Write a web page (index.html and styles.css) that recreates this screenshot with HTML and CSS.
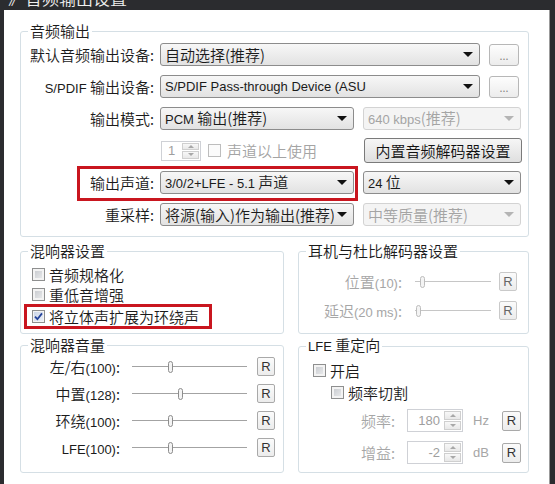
FILE: index.html
```html
<!DOCTYPE html>
<html lang="zh-CN">
<head>
    <meta charset="UTF-8">
    <title>音频输出设置</title>
    <link rel="stylesheet" href="styles.css">
</head>
<body>
    <div class="window">
        <div class="titlebar"><span>》音频输出设置</span></div>

        <div class="dialog">
            <fieldset class="group">
                <legend>音频输出</legend>
                <div class="rows">
                    <div class="row">
                        <span class="lbl">默认音频输出设备:</span>
                        <div class="combo w-wide"><span class="val">自动选择(推荐)</span><i class="arrow"></i></div>
                        <button class="more">...</button>
                    </div>
                    <div class="row">
                        <span class="lbl"><span class="en">S/PDIF</span> 输出设备:</span>
                        <div class="combo w-wide"><span class="val en">S/PDIF Pass-through Device (ASU</span><i class="arrow"></i></div>
                        <button class="more">...</button>
                    </div>
                    <div class="row">
                        <span class="lbl">输出模式:</span>
                        <div class="combo w-mid"><span class="val"><span class="en">PCM</span> 输出(推荐)</span><i class="arrow"></i></div>
                        <div class="combo w-side disabled"><span class="val"><span class="en">640 kbps</span>(推荐)</span><i class="arrow"></i></div>
                    </div>
                    <div class="row">
                        <span class="lbl"></span>
                        <div class="spin spin-sm"><span class="spin-val en">1</span><span class="spin-btns"><i class="up"></i><i class="down"></i></span></div>
                        <span class="check off"><span class="box"></span>声道以上使用</span>
                        <button class="btn">内置音频解码器设置</button>
                    </div>
                    <div class="row">
                        <span class="mark mark-channel"></span>
                        <span class="lbl">输出声道:</span>
                        <div class="combo w-mid"><span class="val"><span class="en">3/0/2+LFE - 5.1</span> 声道</span><i class="arrow"></i></div>
                        <div class="combo w-side"><span class="val"><span class="en">24</span> 位</span><i class="arrow"></i></div>
                    </div>
                    <div class="row">
                        <span class="lbl">重采样:</span>
                        <div class="combo w-mid"><span class="val">将源(输入)作为输出(推荐)</span><i class="arrow"></i></div>
                        <div class="combo w-side disabled"><span class="val">中等质量(推荐)</span><i class="arrow"></i></div>
                    </div>
                </div>
            </fieldset>

            <div class="lower">
                <fieldset class="group">
                    <legend>混响器设置</legend>
                    <div class="mixer-opts">
                        <span class="check"><span class="box"></span>音频规格化</span>
                        <span class="check"><span class="box"></span>重低音增强</span>
                        <span class="check last">
                            <span class="mark mark-stereo"></span>
                            <span class="box on"><svg viewBox="0 0 9 9" width="9" height="9"><path d="M1 4.6 L3.4 7.2 L8 1.4" fill="none" stroke="#24439a" stroke-width="1.8"/></svg></span>将立体声扩展为环绕声
                        </span>
                    </div>
                </fieldset>

                <fieldset class="group">
                    <legend>耳机与杜比解码器设置</legend>
                    <div class="phones">
                        <div class="srow">
                            <span class="slbl">位置<span class="en">(10)</span>:</span>
                            <div class="slider"><span class="thumb" style="left: 9%"></span></div>
                            <button class="r">R</button>
                        </div>
                        <div class="srow">
                            <span class="slbl">延迟<span class="en">(20 ms)</span>:</span>
                            <div class="slider"><span class="thumb" style="left: 4%"></span></div>
                            <button class="r">R</button>
                        </div>
                    </div>
                </fieldset>

                <fieldset class="group">
                    <legend>混响器音量</legend>
                    <div class="volume">
                        <div class="srow">
                            <span class="slbl">左/右<span class="en">(100)</span>:</span>
                            <div class="slider"><span class="thumb" style="left: 33%"></span></div>
                            <button class="r">R</button>
                        </div>
                        <div class="srow">
                            <span class="slbl">中置<span class="en">(128)</span>:</span>
                            <div class="slider"><span class="thumb" style="left: 42%"></span></div>
                            <button class="r">R</button>
                        </div>
                        <div class="srow">
                            <span class="slbl">环绕<span class="en">(100)</span>:</span>
                            <div class="slider"><span class="thumb" style="left: 33%"></span></div>
                            <button class="r">R</button>
                        </div>
                        <div class="srow">
                            <span class="slbl"><span class="en">LFE(100)</span>:</span>
                            <div class="slider"><span class="thumb" style="left: 33%"></span></div>
                            <button class="r">R</button>
                        </div>
                    </div>
                </fieldset>

                <fieldset class="group">
                    <legend><span class="en">LFE</span> 重定向</legend>
                    <div class="lfe">
                        <span class="check"><span class="box"></span>开启</span>
                        <span class="check indent"><span class="box"></span>频率切割</span>
                        <div class="nrow">
                            <span class="nlbl">频率:</span>
                            <div class="spin"><span class="spin-val en">180</span><span class="spin-btns"><i class="up"></i><i class="down"></i></span></div>
                            <span class="unit en">Hz</span>
                            <button class="r">R</button>
                        </div>
                        <div class="nrow">
                            <span class="nlbl">增益:</span>
                            <div class="spin"><span class="spin-val en">-2</span><span class="spin-btns"><i class="up"></i><i class="down"></i></span></div>
                            <span class="unit en">dB</span>
                            <button class="r">R</button>
                        </div>
                    </div>
                </fieldset>
            </div>
        </div>
    </div>
</body>
</html>
```

FILE: styles.css
```css
/* Window frame */
* {
    box-sizing: border-box;
}

body {
    margin: 0;
    width: 555px;
    height: 484px;
    overflow: hidden;
    background-color: #2b2c2f;
    font-family: "Noto Sans CJK SC", sans-serif;
    font-size: 15px;
    font-weight: 350;
    color: #1b1b1b;
}

/* latin runs are drawn smaller, like the dialog's UI font */
.en {
    font-family: "Liberation Sans", "Noto Sans CJK SC", sans-serif;
    font-size: 13px;
    font-weight: 400;
}

.window {
    display: flex;
    flex-direction: column;
    height: 484px;
}

.titlebar {
    height: 10px;
    overflow: hidden;
    padding-left: 8px;
    color: #f0f0f0;
    font-size: 17px;
    line-height: 20px;
}

.titlebar span {
    display: block;
    margin-top: -12px;
}

.dialog {
    flex: 1;
    margin: 0 5px 0 4px;
    padding: 12px 20px 0 16px;
    background-color: #ffffff;
    border-right: 1px solid #9b9b9b;
}

/* Group boxes */
.group {
    margin: 0;
    padding: 0;
    min-width: 0;
    border: 1px solid #d5dfe5;
    border-radius: 3px;
}

.group legend {
    margin-left: 7px;
    padding: 0 2px;
    font-size: 15px;
    line-height: 18px;
}

.rows {
    display: flex;
    flex-direction: column;
    gap: 9px;
    padding: 3px 0 10px;
}

.row {
    position: relative;
    display: flex;
    align-items: center;
    height: 23px;
}

.lbl {
    flex: none;
    width: 136px;
    padding-right: 3px;
    text-align: right;
    white-space: nowrap;
}

/* Combo boxes */
.combo {
    flex: none;
    display: flex;
    align-items: center;
    height: 23px;
    padding-left: 4px;
    border: 1px solid #8c8c8c;
    border-radius: 3px;
    background: linear-gradient(#f7f7f7, #e2e2e2);
    white-space: nowrap;
    overflow: hidden;
}

.combo .val {
    flex: 1;
    overflow: hidden;
    line-height: 21px;
}

.combo .arrow {
    flex: none;
    margin: 0 6px 0 3px;
    border-left: 5px solid transparent;
    border-right: 5px solid transparent;
    border-top: 5px solid #111;
}

.combo.disabled {
    border-color: #d3d3d3;
    background: #f4f4f4;
    color: #a4a4a4;
}

.combo.disabled .arrow {
    border-top-color: #b4b4b4;
}

.w-wide {
    width: 320px;
    margin-left: 3px;
}

.w-mid {
    width: 194px;
    margin-left: 3px;
}

.w-side {
    width: 158px;
    margin-left: 9px;
}

/* Buttons */
button {
    font-family: inherit;
    font-weight: inherit;
    padding: 0;
    cursor: pointer;
}

.more {
    flex: none;
    width: 30px;
    height: 22px;
    margin-left: 9px;
    border: 1px solid #b7b7b7;
    border-radius: 3px;
    background: linear-gradient(#fdfdfd, #ececec);
    color: #808080;
    font-size: 11px;
    line-height: 18px;
}

.btn {
    width: 158px;
    height: 25px;
    margin-left: auto;
    margin-right: 6px;
    border: 1px solid #7a7a7a;
    border-radius: 3px;
    background: linear-gradient(#f6f6f6, #dfdfdf);
    color: #111;
    font-size: 15px;
    line-height: 23px;
}

.r {
    flex: none;
    width: 18px;
    height: 19px;
    border: 1px solid #a9a9a9;
    border-radius: 2px;
    background: linear-gradient(#fbfbfb, #ececec);
    color: #333;
    font-family: "Liberation Sans", sans-serif;
    font-size: 13px;
    line-height: 17px;
}

/* Spin boxes */
.spin {
    flex: none;
    display: flex;
    width: 56px;
    height: 23px;
    margin-left: 12px;
    border: 1px solid #cfd1d6;
    background-color: #fff;
}

.spin-val {
    flex: 1;
    padding-right: 4px;
    text-align: right;
    line-height: 21px;
    color: #9e9e9e;
}

.spin-btns {
    flex: none;
    display: flex;
    flex-direction: column;
    gap: 1px;
    width: 18px;
    padding: 1px 1px 1px 0;
}

.spin-btns i {
    flex: 1;
    display: flex;
    align-items: center;
    justify-content: center;
    border: 1px solid #cfcfcf;
    background: linear-gradient(#f8f8f8, #e8e8e8);
}

.spin-btns i::before {
    content: "";
    border-left: 3px solid transparent;
    border-right: 3px solid transparent;
    border-bottom: 3px solid #a8a8a8;
}

.spin-btns .down::before {
    border-bottom: 0;
    border-top: 3px solid #a8a8a8;
}

.spin-sm {
    width: 40px;
    height: 20px;
    margin-left: 4px;
}

.spin-sm .spin-val {
    text-align: left;
    padding-left: 6px;
    line-height: 18px;
}

/* Check boxes */
.check {
    position: relative;
    display: flex;
    align-items: center;
    gap: 4px;
    height: 20px;
    white-space: nowrap;
}

.box {
    flex: none;
    display: flex;
    align-items: center;
    justify-content: center;
    width: 13px;
    height: 13px;
    border: 1px solid #8e8f8f;
    background: linear-gradient(135deg, #c3c6cb, #eeeff0);
    box-shadow: inset 0 0 0 2px #f3f3f3;
}

.box.on {
    background: linear-gradient(135deg, #c9d3e6, #eef2f8);
    box-shadow: inset 0 0 0 1px #f3f3f3;
}

.row .check {
    margin-left: 7px;
    gap: 6px;
    color: #a4a4a4;
}

.check.off .box {
    border-color: #bdbdbd;
    background: #fbfbfb;
    box-shadow: none;
}

/* Red highlight frames */
.mark {
    position: absolute;
    border: 3px solid #c9161f;
}

.mark-channel {
    left: 56px;
    top: -5px;
    width: 281px;
    height: 35px;
}

.mark-stereo {
    left: -8px;
    top: -2px;
    width: 188px;
    height: 25px;
}

/* Lower groups */
.lower {
    display: grid;
    grid-template-columns: 264px 231px;
    column-gap: 14px;
    row-gap: 2px;
    margin-top: 5px;
}

.mixer-opts {
    padding: 4px 0 7px 11px;
}

.mixer-opts .last {
    margin-top: 2px;
}

.srow {
    display: flex;
    align-items: center;
    height: 20px;
}

.slbl {
    flex: none;
    text-align: right;
    white-space: nowrap;
}

.slider {
    position: relative;
    flex: none;
    height: 19px;
    background: linear-gradient(#a3a3a3, #a3a3a3) center / 100% 1px no-repeat;
}

.thumb {
    position: absolute;
    top: 4px;
    width: 5px;
    height: 12px;
    margin-left: -2px;
    border: 1px solid #8d8d8d;
    border-radius: 3px;
    background-color: #f4f4f4;
}

.phones {
    display: flex;
    flex-direction: column;
    gap: 9px;
    padding-top: 11px;
}

.phones .slbl {
    width: 103px;
    color: #a6a6a6;
}

.phones .slider {
    width: 76px;
    margin-left: 13px;
    background-image: linear-gradient(#c6c6c6, #c6c6c6);
}

.phones .thumb {
    border-color: #bdbdbd;
}

.phones .r {
    margin-left: 8px;
    border-color: #c9c9c9;
    color: #666;
}

.volume {
    display: flex;
    flex-direction: column;
    gap: 8px;
    padding: 3px 0 15px;
}

.volume .srow {
    height: 19px;
}

.volume .slbl {
    width: 99px;
}

.volume .slider {
    width: 115px;
    margin-left: 12px;
}

.volume .r {
    margin-left: 10px;
}

.lfe {
    padding: 4px 0 0 14px;
}

.lfe .indent {
    margin: 2px 0 0 18px;
}

.nrow {
    display: flex;
    align-items: center;
    height: 23px;
    margin-top: 7px;
}

.nrow + .nrow {
    margin-top: 9px;
}

.nlbl {
    flex: none;
    width: 82px;
    text-align: right;
    color: #a6a6a6;
}

.unit {
    flex: none;
    width: 29px;
    margin-left: 10px;
    color: #a6a6a6;
}

.lfe .r {
    width: 19px;
    height: 20px;
}
```
